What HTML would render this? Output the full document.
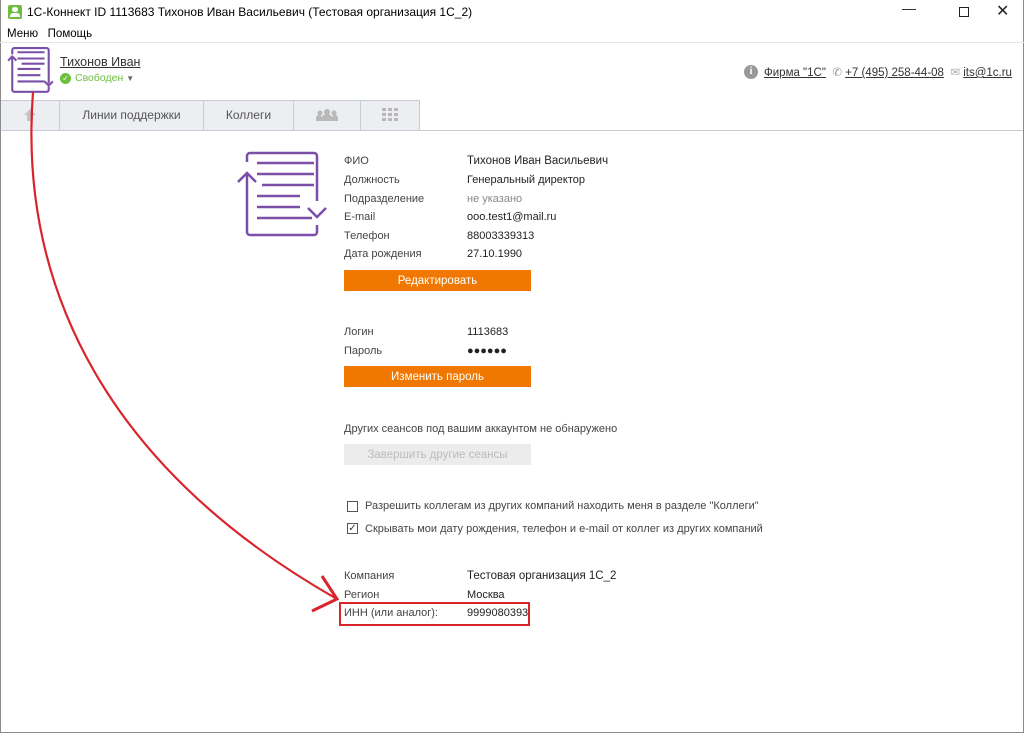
<!DOCTYPE html>
<html><head><meta charset="utf-8"><style>
*{margin:0;padding:0;box-sizing:border-box}
body{width:1024px;height:733px;background:#fff;font-family:"Liberation Sans","DejaVu Sans",sans-serif;font-size:11px;color:#333;position:relative;overflow:hidden}
.win{position:absolute;left:0;top:0;width:1024px;height:733px;border:1px solid #8a8a8a;border-top:none}
.abs{position:absolute;white-space:nowrap}
.lbl{color:#444;font-size:11px}
.val{color:#222;font-size:11px}
.btn{position:absolute;left:344px;width:187px;height:21px;background:#f07800;color:#fff;text-align:center;line-height:22px;font-size:11.5px}
.tab{position:absolute;top:101px;height:29px;border-right:1px solid #c8ccd4;background:#eceef1;color:#555;font-size:12px;text-align:center;line-height:29px}
a{color:#333;text-decoration:underline}
.cb{position:absolute;width:11px;height:11px;border:1px solid #555;background:#fff}
</style></head><body>
<div class="win"></div>
<div class="abs" style="left:8px;top:5px;width:14px;height:14px;background:#6cbf3e;border-radius:2px"></div>
<div class="abs" style="left:12px;top:7px;width:6px;height:5px;background:#fff;border-radius:3px"></div>
<div class="abs" style="left:10px;top:13px;width:10px;height:4px;background:#fff;border-radius:3px 3px 0 0"></div>
<div class="abs" style="left:27px;top:5px;font-size:12px;color:#000">1C-Коннект ID 1113683 Тихонов Иван Васильевич (Тестовая организация 1С_2)</div>
<div class="abs" style="left:902px;top:0px;font-size:14px;color:#222">&#8212;</div>
<div class="abs" style="left:959px;top:7px;width:10px;height:10px;border:1px solid #222"></div>
<div class="abs" style="left:996px;top:1px;font-size:16px;color:#222">✕</div>
<div class="abs" style="left:7px;top:28px;font-size:11.5px;color:#000">Меню&nbsp;&nbsp;&nbsp;Помощь</div>
<div class="abs" style="left:0;top:42px;width:1024px;height:1px;background:#e6e6e6"></div>
<svg class="abs" style="left:6px;top:46px" width="50" height="50" viewBox="0 0 48 48" fill="none" stroke="#7b4fa8" stroke-width="2">
<path d="M6 8V4a2 2 0 0 1 2-2h31a2 2 0 0 1 2 2v32M6 22v20a2 2 0 0 0 2 2h31a2 2 0 0 0 2-2v-3"/>
<path d="M2 14l4-4 4 4M6 10v12M37 34l4 4 4-4"/>
<path d="M11 6h26M11 12h26M15 17h22M11 22h22M11 28h22M11 34h26"/>
</svg>
<div class="abs" style="left:60px;top:55px;font-size:12.5px"><a>Тихонов Иван</a></div>
<div class="abs" style="left:60px;top:73px;width:11px;height:11px;border-radius:50%;background:#6cbf3e;color:#fff;font-size:8px;text-align:center;line-height:11px">✓</div>
<div class="abs" style="left:75px;top:72px;color:#6cbf3e;font-size:10.5px">Свободен <span style="color:#666;font-size:8px">▼</span></div>
<div class="abs" style="left:744px;top:65px;width:14px;height:14px;border-radius:50%;background:#999;color:#fff;font-size:10px;text-align:center;line-height:14px;font-weight:bold;font-family:'Liberation Serif'">i</div>
<div class="abs" style="left:764px;top:65px;font-size:11.5px"><a>Фирма "1С"</a> <span style="color:#999">&nbsp;✆&nbsp;</span><a>+7 (495) 258-44-08</a> <span style="color:#aaa">&nbsp;✉&nbsp;</span><a>its@1c.ru</a></div>
<div class="abs" style="left:1px;top:100px;width:419px;height:1px;background:#c8ccd4"></div>
<div class="abs" style="left:1px;top:130px;width:1022px;height:1px;background:#c8ccd4"></div>
<div class="tab" style="left:1px;width:59px"></div>
<svg class="abs" style="left:23px;top:108px" width="14" height="14" viewBox="0 0 14 14"><path d="M7 1L1 7h3v6h6V7h3z" fill="#c4c4c4"/></svg>
<div class="tab" style="left:60px;width:144px">Линии поддержки</div>
<div class="tab" style="left:204px;width:90px">Коллеги</div>
<div class="tab" style="left:294px;width:67px"></div>
<svg class="abs" style="left:315px;top:108px" width="24" height="14" viewBox="0 0 24 14" fill="#b8b8b8"><circle cx="5" cy="5" r="2.5"/><circle cx="19" cy="5" r="2.5"/><circle cx="12" cy="4" r="3"/><path d="M1 13v-3a3 3 0 0 1 6 0v3zM17 13v-3a3 3 0 0 1 6 0v3zM7 13V10a5 4 0 0 1 10 0v3z"/></svg>
<div class="tab" style="left:361px;width:59px"></div>
<svg class="abs" style="left:382px;top:108px" width="16" height="14" viewBox="0 0 16 14" fill="#b8b8b8"><rect x="0" y="0" width="4" height="3"/><rect x="6" y="0" width="4" height="3"/><rect x="12" y="0" width="4" height="3"/><rect x="0" y="5" width="4" height="3"/><rect x="6" y="5" width="4" height="3"/><rect x="12" y="5" width="4" height="3"/><rect x="0" y="10" width="4" height="3"/><rect x="6" y="10" width="4" height="3"/><rect x="12" y="10" width="4" height="3"/></svg>
<svg class="abs" style="left:235px;top:150px" width="92" height="88" viewBox="0 0 92 88" fill="none" stroke="#7b4fa8" stroke-width="2.5">
<path d="M12 12V6a3 3 0 0 1 3-3h64a3 3 0 0 1 3 3v45M12 28v54a3 3 0 0 0 3 3h64a3 3 0 0 0 3-3v-7"/>
<path d="M3 32l9-9 9 9M12 23v5M73 58l9 9 9-9"/>
<path d="M22 13h57M22 24h57M27 35h52M22 46h43M22 57h43M22 68h55"/>
</svg>
<div class="abs lbl" style="left:344px;top:155px">ФИО</div><div class="abs val" style="left:467px;top:155px;font-size:11.5px">Тихонов Иван Васильевич</div>
<div class="abs lbl" style="left:344px;top:174px">Должность</div><div class="abs val" style="left:467px;top:174px">Генеральный директор</div>
<div class="abs lbl" style="left:344px;top:193px">Подразделение</div><div class="abs val" style="left:467px;top:193px;color:#888">не указано</div>
<div class="abs lbl" style="left:344px;top:211px">E-mail</div><div class="abs val" style="left:467px;top:211px">ooo.test1@mail.ru</div>
<div class="abs lbl" style="left:344px;top:230px">Телефон</div><div class="abs val" style="left:467px;top:230px">88003339313</div>
<div class="abs lbl" style="left:344px;top:248px">Дата рождения</div><div class="abs val" style="left:467px;top:248px">27.10.1990</div>
<div class="btn" style="top:270px">Редактировать</div>
<div class="abs lbl" style="left:344px;top:326px">Логин</div><div class="abs val" style="left:467px;top:326px">1113683</div>
<div class="abs lbl" style="left:344px;top:345px">Пароль</div><div class="abs val" style="left:467px;top:345px">●●●●●●</div>
<div class="btn" style="top:366px">Изменить пароль</div>
<div class="abs lbl" style="left:344px;top:423px">Других сеансов под вашим аккаунтом не обнаружено</div>
<div class="btn" style="top:444px;background:#ececec;color:#bbb">Завершить другие сеансы</div>
<div class="cb" style="left:347px;top:501px"></div>
<div class="abs lbl" style="left:365px;top:500px">Разрешить коллегам из других компаний находить меня в разделе "Коллеги"</div>
<div class="cb" style="left:347px;top:523px;font-size:10px;line-height:9px;text-align:center;color:#333">✓</div>
<div class="abs lbl" style="left:365px;top:523px">Скрывать мои дату рождения, телефон и e-mail от коллег из других компаний</div>
<div class="abs lbl" style="left:344px;top:570px">Компания</div><div class="abs val" style="left:467px;top:570px;font-size:11.5px">Тестовая организация 1С_2</div>
<div class="abs lbl" style="left:344px;top:589px">Регион</div><div class="abs val" style="left:467px;top:589px">Москва</div>
<div class="abs lbl" style="left:344px;top:607px">ИНН (или аналог):</div><div class="abs val" style="left:467px;top:607px">9999080393</div>
<div class="abs" style="left:339px;top:602px;width:191px;height:24px;border:2px solid #d9242c"></div>
<svg class="abs" style="left:0;top:0" width="1024" height="733" fill="none" stroke="#d9242c" stroke-width="2.2">
<path d="M33 92 C 18 290, 110 470, 337 599"/>
<path d="M322 576 L337 599 L312 611" stroke-width="3"/>
</svg>
</body></html>
